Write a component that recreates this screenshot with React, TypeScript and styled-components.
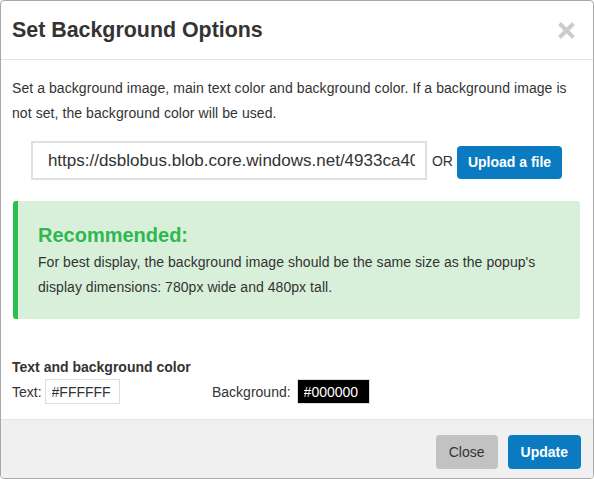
import React from "react";
import styled, { createGlobalStyle } from "styled-components";

const GlobalStyle = createGlobalStyle`
  html, body { margin: 0; padding: 0; background: #ffffff; }
  body { font-family: "Liberation Sans", Arial, Helvetica, sans-serif; color: #333333; }
  * { box-sizing: border-box; }
`;

const Dialog = styled.div`
  width: 594px;
  height: 479px;
  border: 1px solid #a8a8a8;
  border-radius: 4px;
  display: flex;
  flex-direction: column;
  overflow: hidden;
  background: #ffffff;
`;

const Header = styled.div`
  height: 59px;
  flex: none;
  display: flex;
  align-items: center;
  justify-content: space-between;
  padding: 0 17px 0 11px;
  border-bottom: 1px solid #e5e5e5;
`;

const Title = styled.h4`
  margin: 0;
  font-size: 21.4px;
  font-weight: 700;
  color: #333333;
`;

const CloseX = styled.button`
  border: none;
  background: none;
  padding: 0;
  width: 19px;
  height: 19px;
  display: flex;
  align-items: center;
  justify-content: center;
  cursor: pointer;
`;

const Body = styled.div`
  flex: none;
  padding: 16px 12px 15px 11px;
`;

const Intro = styled.p`
  margin: 0;
  font-size: 14px;
  line-height: 25px;
  letter-spacing: 0.07px;
  color: #333333;
`;

const UrlRow = styled.div`
  margin-top: 15px;
  display: flex;
  align-items: center;
  justify-content: center;
  gap: 5px;
`;

const UrlInput = styled.input`
  width: 396px;
  height: 39px;
  border: 2px solid #e0e0e0;
  padding: 0 10px 0 15px;
  font-family: inherit;
  font-size: 17px;
  color: #333333;
  outline: none;
`;

const Or = styled.span`
  font-size: 14px;
  color: #333333;
  margin-right: -1px;
`;

const Button = styled.button<{ $variant: "primary" | "muted" }>`
  height: 34px;
  border: none;
  border-radius: 4px;
  padding: 0 13px;
  font-family: inherit;
  font-size: 14px;
  font-weight: ${(p) => (p.$variant === "primary" ? 700 : 400)};
  color: ${(p) => (p.$variant === "primary" ? "#ffffff" : "#333333")};
  background: ${(p) => (p.$variant === "primary" ? "#0a7bc0" : "#c2c2c2")};
  cursor: pointer;
`;

const UploadButton = styled(Button)`
  height: 33px;
  padding: 0 11px;
  margin-top: 3px;
`;

const Alert = styled.div`
  margin: 21px 1px 0 1px;
  height: 118px;
  background: #d8f0da;
  border-left: 5px solid #2cbe4e;
  border-radius: 3px;
  padding: 22px 20px 0 20px;
`;

const AlertTitle = styled.div`
  font-size: 20px;
  font-weight: 700;
  line-height: 24px;
  color: #2fb84e;
`;

const AlertText = styled.p`
  margin: 3px 0 0 0;
  font-size: 14px;
  line-height: 25px;
  letter-spacing: 0.05px;
  color: #333333;
`;

const SectionTitle = styled.div`
  margin-top: 38px;
  font-size: 14px;
  font-weight: 700;
  line-height: 20px;
  color: #333333;
`;

const ColorRow = styled.div`
  margin-top: 2px;
  display: grid;
  grid-template-columns: 200px 200px;
`;

const ColorField = styled.label<{ $gap: number }>`
  display: flex;
  align-items: center;
  gap: ${(p) => p.$gap}px;
  font-size: 14px;
  color: #333333;
`;

const ColorInput = styled.input<{ $dark?: boolean }>`
  flex: none;
  height: 25px;
  width: ${(p) => (p.$dark ? "73px" : "75px")};
  border: 1px solid #dddddd;
  padding: 0 6px;
  font-family: inherit;
  font-size: 14px;
  outline: none;
  background: ${(p) => (p.$dark ? "#000000" : "#ffffff")};
  color: ${(p) => (p.$dark ? "#ffffff" : "#333333")};
`;

const Footer = styled.div`
  flex: 1;
  background: #f0f0f0;
  border-top: 1px solid #e3e3e3;
  display: flex;
  justify-content: flex-end;
  align-items: flex-start;
  gap: 10px;
  padding: 15px 12px 0 0;
`;

export default function App() {
  return (
    <>
      <GlobalStyle />
      <Dialog>
        <Header>
          <Title>Set Background Options</Title>
          <CloseX aria-label="Close">
            <svg width="19" height="19" viewBox="0 0 19 19">
              <path d="M2.5 2.5 L16.5 16.5 M16.5 2.5 L2.5 16.5" stroke="#cccccc" strokeWidth="4" strokeLinecap="butt" />
            </svg>
          </CloseX>
        </Header>
        <Body>
          <Intro>
            Set a background image, main text color and background color. If a background image is not set, the background color will be used.
          </Intro>
          <UrlRow>
            <UrlInput readOnly value="https://dsblobus.blob.core.windows.net/4933ca40f2d14a5b" />
            <Or>OR</Or>
            <UploadButton $variant="primary">Upload a file</UploadButton>
          </UrlRow>
          <Alert>
            <AlertTitle>Recommended:</AlertTitle>
            <AlertText>
              For best display, the background image should be the same size as the popup's display dimensions: 780px wide and 480px tall.
            </AlertText>
          </Alert>
          <SectionTitle>Text and background color</SectionTitle>
          <ColorRow>
            <ColorField $gap={3}>
              Text:
              <ColorInput readOnly value="#FFFFFF" />
            </ColorField>
            <ColorField $gap={6}>
              Background:
              <ColorInput $dark readOnly value="#000000" />
            </ColorField>
          </ColorRow>
        </Body>
        <Footer>
          <Button $variant="muted">Close</Button>
          <Button $variant="primary">Update</Button>
        </Footer>
      </Dialog>
    </>
  );
}
